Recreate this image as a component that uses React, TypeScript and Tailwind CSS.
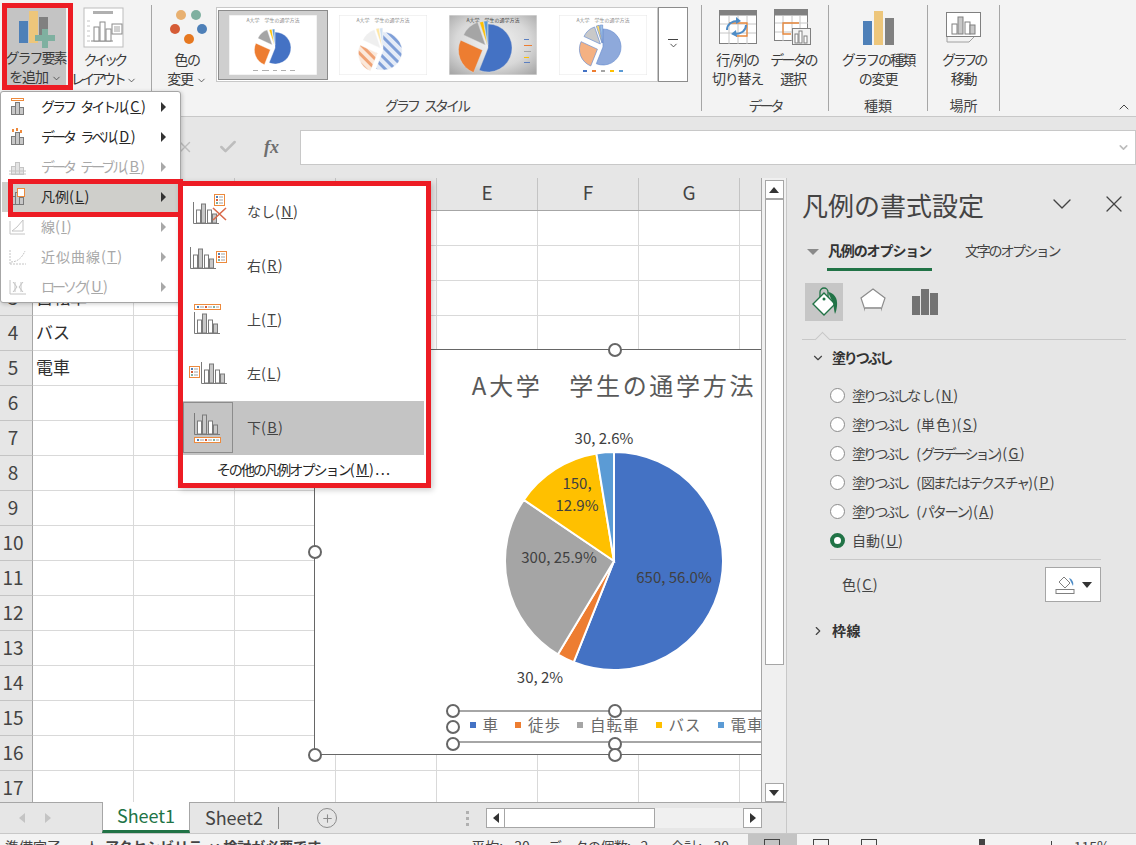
import { Check, ChevronDown, ChevronRight, ChevronUp, Plus, X } from "lucide-react";
import type { ReactNode } from "react";

const COLORS = ["#4472c4", "#ed7d31", "#a5a5a5", "#ffc000", "#5b9bd5"];
const VALUES = [650, 30, 300, 150, 30];
const THUMB_VALUES = [650, 300, 150, 30, 30];
const COLUMNS = ["A", "B", "C", "D", "E", "F", "G", "H"];
const ROWS = [1, 2, 3, 4, 5, 6, 7, 8, 9, 10, 11, 12, 13, 14, 15, 16, 17];
const CELLS: Record<number, string> = { 3: "自転車", 4: "バス", 5: "電車" };

const point = (cx: number, cy: number, r: number, deg: number) => {
  const rad = ((deg - 90) * Math.PI) / 180;
  return [cx + r * Math.cos(rad), cy + r * Math.sin(rad)];
};

const Pie = ({
  cx,
  cy,
  r,
  values = VALUES,
  explode = [0, 0, 0, 0, 0],
  fills = COLORS,
  stroke = "#ffffff",
  strokeWidth = 2,
}: {
  cx: number;
  cy: number;
  r: number;
  values?: number[];
  explode?: number[];
  fills?: string[];
  stroke?: string;
  strokeWidth?: number;
}) => {
  let angle = 0;
  return (
    <>
      {values.map((v, i) => {
        const sweep = (v / 1160) * 360;
        const [ox, oy] = point(cx, cy, explode[i], angle + sweep / 2);
        const [x0, y0] = point(ox, oy, r, angle);
        const [x1, y1] = point(ox, oy, r, angle + sweep);
        const d = `M${ox} ${oy}L${x0} ${y0}A${r} ${r} 0 ${sweep > 180 ? 1 : 0} 1 ${x1} ${y1}Z`;
        angle += sweep;
        return <path key={i} d={d} fill={fills[i]} stroke={stroke} strokeWidth={strokeWidth} />;
      })}
    </>
  );
};

const Thumb = ({ kind }: { kind: number }) => (
  <svg width="88" height="60" viewBox="0 0 88 60" className="shrink-0">
    <defs>
      <radialGradient id="thumbBg" cx="0.5" cy="0.45" r="0.7">
        <stop offset="0" stopColor="#f4f4f4" />
        <stop offset="0.6" stopColor="#d8d8d8" />
        <stop offset="1" stopColor="#a8a8a8" />
      </radialGradient>
      <pattern id="hatchBlue" width="7" height="7" patternUnits="userSpaceOnUse" patternTransform="rotate(-45)">
        <rect width="7" height="7" fill="#e4ebf7" />
        <rect width="3" height="7" fill="#7f9fd8" />
      </pattern>
      <pattern id="hatchOrange" width="7" height="7" patternUnits="userSpaceOnUse" patternTransform="rotate(-45)">
        <rect width="7" height="7" fill="#fbe8da" />
        <rect width="3" height="7" fill="#f0a274" />
      </pattern>
    </defs>
    <rect width="88" height="60" fill={kind === 2 ? "url(#thumbBg)" : "#ffffff"} stroke="#e6e6e6" />
    <text x="44" y="7" textAnchor="middle" fontSize="5" fill={kind === 2 ? "#444444" : "#8a8a8a"}>
      A大学　学生の通学方法
    </text>
    {kind === 0 && (
      <Pie cx={46} cy={33} r={16} values={THUMB_VALUES} explode={[0, 5, 4, 3, 3]} strokeWidth={0.4} />
    )}
    {kind === 1 && (
      <Pie
        cx={44}
        cy={36}
        r={19}
        values={THUMB_VALUES}
        explode={[0, 6, 4, 4, 4]}
        fills={["url(#hatchBlue)", "url(#hatchOrange)", "#efefef", "#ffe7a3", "#cfe1f3"]}
        stroke="#f4f4f4"
        strokeWidth={0.4}
      />
    )}
    {kind === 2 && (
      <Pie cx={39} cy={33} r={24} values={THUMB_VALUES} explode={[0, 6, 4, 3, 3]} stroke="#dddddd" strokeWidth={0.4} />
    )}
    {kind === 3 && (
      <Pie
        cx={44}
        cy={32}
        r={18}
        values={THUMB_VALUES}
        explode={[0, 6, 4, 4, 4]}
        fills={["#8ea9db", "#f4b183", "#c9c9c9", "#ffd966", "#9dc3e6"]}
        stroke="#6b8fd0"
        strokeWidth={0.7}
      />
    )}
    {kind === 2 && (
      <g fill="#5b7fc0">
        <rect x="75" y="24" width="5" height="1" />
        <rect x="75" y="30" width="8" height="1" fill="#ed7d31" />
        <rect x="75" y="36" width="7" height="1" fill="#a5a5a5" />
        <rect x="75" y="42" width="5" height="1" fill="#ffc000" />
        <rect x="75" y="47" width="6" height="1" />
      </g>
    )}
    {kind === 3 && (
      <g>
        {COLORS.map((c, i) => (
          <rect key={c} x={24 + i * 9} y="55" width="4" height="2" fill={c} />
        ))}
      </g>
    )}
    {kind === 0 && (
      <g fill="#b0b0b0">
        <rect x="24" y="55" width="5" height="1" />
        <rect x="33" y="55" width="7" height="1" />
        <rect x="44" y="55" width="4" height="1" />
        <rect x="52" y="55" width="5" height="1" />
        <rect x="61" y="55" width="5" height="1" />
      </g>
    )}
  </svg>
);

const RibbonLabel = ({ lines }: { lines: ReactNode[] }) => (
  <div className="-mt-[1px] flex flex-col items-center whitespace-nowrap text-[14px] leading-[19px] tracking-[-1.2px] text-[#3a3a3a]">
    {lines.map((l, i) => (
      <span key={i}>{l}</span>
    ))}
  </div>
);

const Caret = () => <ChevronDown size={11} strokeWidth={1.8} className="ml-[3px] inline-block text-[#444444]" />;

const RibbonButton = ({
  width,
  icon,
  lines,
  className = "",
}: {
  width: string;
  icon: ReactNode;
  lines: ReactNode[];
  className?: string;
}) => (
  <div className={`flex flex-col items-center ${width} ${className}`}>
    <div className="flex h-[46px] items-center justify-center">{icon}</div>
    <RibbonLabel lines={lines} />
  </div>
);

const Group = ({ width, label, children }: { width: string; label: ReactNode; children: ReactNode }) => (
  <div className={`flex h-[106px] shrink-0 flex-col border-r border-[#a6a6a6] ${width}`}>
    <div className="flex h-[90px] items-start justify-center">{children}</div>
    <div className="h-[16px] whitespace-nowrap text-center text-[14px] leading-[20px] text-[#444444]">{label}</div>
  </div>
);

const AddIcon = () => (
  <svg width="40" height="40" viewBox="0 0 40 40">
    <rect x="3" y="12" width="9" height="22" fill="#4e80b8" />
    <rect x="13" y="2" width="9" height="32" fill="#edc67b" />
    <rect x="23" y="8" width="9" height="20" fill="#808080" />
    <path d="M26 20h6v6h7v6h-7v7h-6v-7h-7v-6h7z" fill="#7fb0a0" />
  </svg>
);

const QuickIcon = () => (
  <svg width="42" height="42" viewBox="0 0 42 42">
    <rect x="1" y="1" width="39" height="39" fill="#ffffff" stroke="#bdbdbd" />
    <rect x="10" y="4" width="20" height="3" fill="#b0b0b0" />
    <path d="M4 14h3M4 19h3M4 24h3M4 29h3M4 34h3" stroke="#c4c4c4" />
    <path d="M8 34h22" fill="none" stroke="#8a8a8a" />
    <g fill="#ffffff" stroke="#8a8a8a">
      <rect x="11" y="20" width="5" height="14" />
      <rect x="17" y="15" width="5" height="19" />
      <rect x="23" y="22" width="5" height="12" />
    </g>
    <rect x="29" y="17" width="10" height="10" fill="#ffffff" stroke="#8a8a8a" />
    <path d="M31 20h6M31 22h6M31 24h6" stroke="#8a8a8a" strokeWidth="0.8" />
  </svg>
);

const ColorIcon = () => (
  <svg width="40" height="42" viewBox="0 0 40 42">
    <circle cx="14" cy="8" r="5" fill="#e8b070" />
    <circle cx="29" cy="8" r="5" fill="#7fb0a0" />
    <circle cx="8" cy="22" r="5" fill="#d55b35" />
    <circle cx="35" cy="22" r="5" fill="#4e80b8" />
    <circle cx="22" cy="32" r="5" fill="#e67820" />
  </svg>
);

const SwitchIcon = () => (
  <svg width="38" height="36" viewBox="0 0 38 36">
    <rect x="0.5" y="0.5" width="37" height="33" fill="#ffffff" stroke="#808080" />
    <rect x="0.5" y="0.5" width="37" height="5" fill="#808080" />
    <path d="M1 14h36M1 23h36M10 6v28M19 6v28M28 6v28" stroke="#c6c6c6" />
    <path d="M10 13h18v13H17" fill="none" stroke="#e8873a" strokeWidth="1.3" />
    <path d="M8 20c0-6 5-9 11-9M27 15c0 6-5 9-11 9" fill="none" stroke="#4e8cc6" strokeWidth="2" />
    <path d="M17 7l5 4-5 3zM18 27l-6-3 5-4z" fill="#4e8cc6" />
  </svg>
);

const SelectIcon = () => (
  <svg width="38" height="38" viewBox="0 0 38 38">
    <rect x="0.5" y="0.5" width="33" height="31" fill="#ffffff" stroke="#808080" />
    <rect x="0.5" y="0.5" width="33" height="6" fill="#808080" />
    <path d="M1 14h33M1 23h33M9 7v25M18 7v25M26 7v25" stroke="#c6c6c6" />
    <path d="M25 14H9v11h8" fill="none" stroke="#e8873a" strokeWidth="1.3" />
    <rect x="18.5" y="19.5" width="18" height="16" fill="#f3f3f3" stroke="#808080" />
    <g fill="#ffffff" stroke="#808080">
      <rect x="21" y="25" width="3" height="9" />
      <rect x="25" y="22" width="3" height="12" />
      <rect x="30" y="27" width="3" height="7" />
    </g>
  </svg>
);

const TypeIcon = () => (
  <svg width="34" height="36" viewBox="0 0 34 36">
    <rect x="2" y="11" width="9" height="24" fill="#4e80b8" />
    <rect x="13" y="1" width="9" height="34" fill="#edc67b" />
    <rect x="24" y="8" width="9" height="27" fill="#808080" />
  </svg>
);

const MoveIcon = () => (
  <svg width="36" height="34" viewBox="0 0 36 34">
    <path d="M1 25v6h22l6-6" fill="none" stroke="#a0a0a0" />
    <rect x="0.5" y="1.5" width="34" height="24" fill="#ffffff" stroke="#808080" />
    <rect x="6" y="13" width="5" height="10" fill="#ffffff" stroke="#808080" />
    <rect x="12" y="6" width="5" height="17" fill="#c8c8c8" stroke="#808080" />
    <rect x="19" y="11" width="5" height="12" fill="#ffffff" stroke="#808080" />
    <rect x="24" y="14" width="5" height="9" fill="#c8c8c8" stroke="#808080" />
  </svg>
);

const Ribbon = () => (
  <div className="flex h-[116px] shrink-0 bg-[#f3f3f3] pt-[5px]">
    <Group width="w-[152px]" label="">
      <div className="-mt-[2px] ml-[5px] flex h-[83px] w-[61px] flex-col items-center overflow-visible bg-[#c4c4c4] pt-[5px]">
        <div className="flex h-[43px] items-center">
          <AddIcon />
        </div>
        <RibbonLabel
          lines={[
            <span className="tracking-[-2px]">グラフ要素</span>,
            <>
              を追加
              <Caret />
            </>,
          ]}
        />
      </div>
      <RibbonButton
        width="w-[72px]"
        className="ml-[2px]"
        icon={<QuickIcon />}
        lines={[
          <span className="tracking-[-3.8px]">クイック</span>,
          <>
            <span className="tracking-[-3.5px]">レイアウト</span>
            <Caret />
          </>,
        ]}
      />
      <div className="w-[11px]" />
    </Group>
    <Group
      width="w-[550px]"
      label={<span className="tracking-[-3px] [word-spacing:6px]">グラフ スタイル</span>}
    >
      <div className="ml-[7px] w-[56px]">
        <RibbonButton
          width="w-[56px]"
          icon={<ColorIcon />}
          lines={[
            "色の",
            <>
              変更
              <Caret />
            </>,
          ]}
        />
      </div>
      <div className="ml-[1px] mt-[2px] flex h-[75px] w-[442px] items-center border border-[#c8c8c8] bg-white pl-[1px]">
        <div className="flex h-[70px] w-[110px] shrink-0 items-center justify-center border border-[#8c8c8c] bg-[#cfcfcf]">
          <Thumb kind={0} />
        </div>
        <div className="ml-[11px] flex gap-[22px]">
          <Thumb kind={1} />
          <Thumb kind={2} />
          <Thumb kind={3} />
        </div>
      </div>
      <div className="mt-[2px] flex h-[75px] w-[30px] shrink-0 flex-col items-center justify-center border border-[#8c8c8c] bg-white">
        <div className="h-px w-[10px] bg-[#444444]" />
        <ChevronDown size={11} strokeWidth={2} className="text-[#444444]" />
      </div>
      <div className="w-[13px]" />
    </Group>
    <Group width="w-[127px]" label={<span className="tracking-[-3px]">データ</span>}>
      <RibbonButton width="w-[56px]" icon={<SwitchIcon />} lines={["行/列の", "切り替え"]} />
      <RibbonButton
        width="w-[55px]"
        icon={<SelectIcon />}
        lines={[<span className="tracking-[-2.6px]">データの</span>, "選択"]}
      />
    </Group>
    <Group width="w-[99px]" label="種類">
      <RibbonButton
        width="w-[90px]"
        icon={<TypeIcon />}
        lines={[<span className="tracking-[-1.9px]">グラフの種類</span>, "の変更"]}
      />
    </Group>
    <Group width="w-[72px]" label="場所">
      <RibbonButton
        width="w-[60px]"
        icon={<MoveIcon />}
        lines={[<span className="tracking-[-3.2px]">グラフの</span>, "移動"]}
      />
    </Group>
    <div className="flex flex-1 items-end justify-end pb-[1px] pr-[4px]">
      <ChevronUp size={16} strokeWidth={1.5} className="text-[#444444]" />
    </div>
  </div>
);

const FormulaBar = () => (
  <div className="flex h-[62px] shrink-0 border-t border-[#c8c8c8] bg-[#e6e6e6] pt-[13px]">
    <div className="flex h-[34px] w-[300px] shrink-0 items-center pl-[176px]">
      <X size={18} strokeWidth={2} className="text-[#bdbdbd]" />
      <Check size={20} strokeWidth={3} className="ml-[24px] text-[#bdbdbd]" />
      <span className="ml-[26px] font-['Liberation_Serif',serif] text-[18px] font-bold italic text-[#6e6e6e]">fx</span>
    </div>
    <div className="flex h-[35px] flex-1 items-center justify-end border border-[#c8c8c8] bg-white pr-[5px]">
      <ChevronDown size={13} strokeWidth={3} className="text-[#bdbdbd]" />
    </div>
  </div>
);

const Handle = ({ x, y }: { x: number; y: number }) => (
  <span
    className="absolute h-[14px] w-[14px] rounded-full border-[2.5px] border-[#666666] bg-white"
    style={{ left: x - 7, top: y - 7 }}
  />
);

const DataLabel = ({ x, y, children }: { x: number; y: number; children: ReactNode }) => (
  <span
    className="absolute -translate-x-1/2 -translate-y-1/2 whitespace-nowrap text-[15px] leading-[21px] text-[#404040]"
    style={{ left: x, top: y }}
  >
    {children}
  </span>
);

const LegendItem = ({ color, label }: { color: string; label: string }) => (
  <div className="flex shrink-0 items-center whitespace-nowrap">
    <span className="h-[6px] w-[6px]" style={{ backgroundColor: color }} />
    <span className="ml-[7px] text-[15.5px] tracking-[1px] text-[#6a6a6a]">{label}</span>
  </div>
);

// chart spills past the sheet's right edge, the grid clips it
const Chart = () => (
  <div className="absolute left-[314px] top-[171px] h-[406px] w-[600px] border border-[#666666] bg-white">
    <div className="flex h-full flex-col items-center">
      <div className="mt-[15px] whitespace-nowrap text-[24px] leading-[40px] tracking-[2.7px] text-[#595959]">
        A大学　学生の通学方法
      </div>
      <svg width="232" height="232" viewBox="0 0 232 232" className="mt-[40px] shrink-0">
        <Pie cx={116} cy={116} r={109} />
      </svg>
      <div className="mt-[33px] flex h-[33px] w-[325px] shrink-0 items-center gap-[16px] border-y-2 border-[#a6a6a6] pb-[3px] pl-[18px]">
        <LegendItem color={COLORS[0]} label="車" />
        <LegendItem color={COLORS[1]} label="徒歩" />
        <LegendItem color={COLORS[2]} label="自転車" />
        <LegendItem color={COLORS[3]} label="バス" />
        <LegendItem color={COLORS[4]} label="電車" />
      </div>
    </div>
    <DataLabel x={289} y={87}>30, 2.6%</DataLabel>
    <DataLabel x={262} y={144}>
      <span className="block text-center leading-[22px]">150,</span>
      <span className="block text-center leading-[22px]">12.9%</span>
    </DataLabel>
    <DataLabel x={244} y={206}>300, 25.9%</DataLabel>
    <DataLabel x={359} y={226}>650, 56.0%</DataLabel>
    <DataLabel x={225} y={326}>30, 2%</DataLabel>
    <Handle x={300} y={0} />
    <Handle x={0} y={202} />
    <Handle x={0} y={405} />
    <Handle x={138} y={361} />
    <Handle x={300} y={361} />
    <Handle x={138} y={377} />
    <Handle x={138} y={394} />
    <Handle x={300} y={394} />
    <Handle x={300} y={405} />
  </div>
);

const Sheet = () => (
  <div className="relative h-[624px] w-[762px] shrink-0 overflow-hidden border-r border-[#a6a6a6] bg-white">
    <div className="flex h-[33px] border-b border-[#a6a6a6] bg-[#e6e6e6]">
      <div className="w-[33px] shrink-0 border-r border-[#a6a6a6]" />
      {COLUMNS.map((c) => (
        <div
          key={c}
          className="flex w-[101px] shrink-0 items-center justify-center border-r border-[#c4c4c4] pb-[3px] text-[19px] text-[#444444]"
        >
          {c}
        </div>
      ))}
    </div>
    {ROWS.map((r) => (
      <div key={r} className="flex h-[35px]">
        <div className="flex w-[33px] shrink-0 items-center justify-center border-b border-r border-[#a6a6a6] border-b-[#c4c4c4] bg-[#e6e6e6] pb-[2px] pr-[6px] text-[19px] text-[#444444]">
          {r}
        </div>
        {COLUMNS.map((c) => (
          <div
            key={c}
            className="flex w-[101px] shrink-0 items-center border-b border-r border-[#d9d9d9] pb-[2px] pl-[3px] text-[17px] text-[#303030]"
          >
            {c === "A" ? CELLS[r] : ""}
          </div>
        ))}
      </div>
    ))}
    <Chart />
  </div>
);

const ScrollBtn = ({ children, className = "" }: { children: ReactNode; className?: string }) => (
  <div className={`flex shrink-0 items-center justify-center border border-[#a6a6a6] bg-white ${className}`}>
    {children}
  </div>
);

const TriUp = () => <div className="h-0 w-0 border-x-[5px] border-b-[6px] border-x-transparent border-b-[#333333]" />;
const TriDown = () => <div className="h-0 w-0 border-x-[5px] border-t-[6px] border-x-transparent border-t-[#333333]" />;
const TriLeft = () => <div className="h-0 w-0 border-y-[5px] border-r-[6px] border-y-transparent border-r-[#333333]" />;
const TriRight = () => <div className="h-0 w-0 border-y-[5px] border-l-[6px] border-y-transparent border-l-[#333333]" />;

const VerticalScroll = () => (
  <div className="flex h-[624px] w-[24px] shrink-0 flex-col items-center bg-[#f0f0f0] pt-[2px]">
    <ScrollBtn className="h-[19px] w-[19px]">
      <TriUp />
    </ScrollBtn>
    <div className="h-[466px] w-[19px] shrink-0 border border-[#a6a6a6] bg-white" />
    <div className="flex-1" />
    <ScrollBtn className="h-[19px] w-[19px]">
      <TriDown />
    </ScrollBtn>
  </div>
);

const SheetTabs = () => (
  <div className="flex h-[31px] shrink-0 items-stretch border-t border-[#a6a6a6] bg-[#e6e6e6]">
    <div className="flex w-[102px] shrink-0 items-center gap-[20px] pl-[19px] text-[#bdbdbd]">
      <div className="h-0 w-0 border-y-[5px] border-r-[6px] border-y-transparent border-r-[#c4c4c4]" />
      <div className="h-0 w-0 border-y-[5px] border-l-[6px] border-y-transparent border-l-[#c4c4c4]" />
    </div>
    <div className="-mt-px flex w-[88px] shrink-0 items-center justify-center border-x border-[#a6a6a6] border-b-[3px] border-b-[#217346] bg-white pb-[1px] text-[18px] text-[#217346]">
      Sheet1
    </div>
    <div className="flex w-[88px] shrink-0 items-center justify-center pb-[2px] text-[18px] text-[#444444]">Sheet2</div>
    <div className="my-[4px] w-px bg-[#8c8c8c]" />
    <div className="ml-[38px] flex items-center">
      <div className="flex h-[20px] w-[20px] items-center justify-center rounded-full border border-[#8c8c8c]">
        <Plus size={13} strokeWidth={2} className="text-[#8c8c8c]" />
      </div>
    </div>
    <div className="ml-[129px] flex flex-col items-center justify-center gap-[3px]">
      <span className="h-[3px] w-[3px] bg-[#b0b0b0]" />
      <span className="h-[3px] w-[3px] bg-[#b0b0b0]" />
      <span className="h-[3px] w-[3px] bg-[#b0b0b0]" />
    </div>
    <div className="ml-[17px] flex items-center">
      <ScrollBtn className="h-[20px] w-[19px]">
        <TriLeft />
      </ScrollBtn>
      <div className="h-[20px] w-[150px] border border-l-0 border-[#a6a6a6] bg-white" />
      <div className="h-[20px] w-[88px] bg-[#f0f0f0]" />
      <ScrollBtn className="h-[20px] w-[19px]">
        <TriRight />
      </ScrollBtn>
    </div>
  </div>
);

const Accel = ({ k, after = "" }: { k: string; after?: string }) => (
  <span className="text-[14.5px] tracking-[1.3px]">
    (<span className="underline">{k}</span>){after}
  </span>
);

const Radio = ({ label, accel, on = false }: { label: ReactNode; accel: string; on?: boolean }) => (
  <div className="flex h-[29px] items-center">
    <span
      className={
        on
          ? "h-[15px] w-[15px] rounded-full border-[4px] border-[#217346] bg-white"
          : "h-[15px] w-[15px] rounded-full border border-[#8c8c8c] bg-white"
      }
    />
    <span className="ml-[7px] whitespace-nowrap pb-[2px] text-[14px] text-[#444444]">
      {label}
      <Accel k={accel} />
    </span>
  </div>
);

const FILL_WORD = <span className="tracking-[-3px]">塗りつぶし</span>;

const BucketIcon = () => (
  <svg width="30" height="30" viewBox="0 0 30 30">
    <path d="M15 6L26 17 15 28 4 17z" fill="#ffffff" stroke="#217346" strokeWidth="1.4" />
    <path d="M11 10V5a4 4 0 0 1 8 0v5" fill="none" stroke="#217346" strokeWidth="1.3" />
    <circle cx="15" cy="12" r="1.5" fill="#217346" />
    <path d="M19 5c6 1 10 6 9 14-.4 3-1 6-2 8-1-3-1-7-2-11z" fill="#217346" />
  </svg>
);

const Pane = () => (
  <div className="flex h-[655px] flex-1 flex-col border-l border-[#c8c8c8] bg-[#e6e6e6] pl-[15px]">
    <div className="flex h-[56px] shrink-0 items-center">
      <div className="whitespace-nowrap pb-[3px] text-[26px] text-[#444444]">凡例の書式設定</div>
      <ChevronDown size={32} strokeWidth={1} className="ml-[62px] -mt-[4px] text-[#444444]" />
      <X size={28} strokeWidth={1.1} className="ml-[22px] -mt-[4px] text-[#444444]" />
    </div>
    <div className="flex h-[37px] shrink-0 items-start">
      <div className="ml-[5px] mt-[15px] h-0 w-0 border-x-[6px] border-t-[6px] border-x-transparent border-t-[#8a8a8a]" />
      <div className="ml-[8px] flex h-[37px] w-[105px] justify-center border-b-[3px] border-[#217346] pt-[6px] text-[14px] font-bold leading-[20px] tracking-[-1.1px] text-[#333333]">
        凡例のオプション
      </div>
      <div className="ml-[33px] whitespace-nowrap pt-[6px] text-[14px] leading-[20px] tracking-[-2.2px] text-[#444444]">
        文字のオプション
      </div>
    </div>
    <div className="mt-[12px] flex h-[38px] shrink-0 items-center">
      <div className="ml-[3px] flex h-[38px] w-[38px] items-center justify-center bg-[#c6c6c6]">
        <BucketIcon />
      </div>
      <svg width="30" height="30" viewBox="0 0 30 30" className="ml-[15px]">
        <path d="M15 2L27 11 22 26H8L3 11z" fill="#ffffff" stroke="#8c8c8c" strokeWidth="1.2" />
        <path d="M7 22h16v6H7z" fill="#e6e6e6" />
        <path d="M7 21h16" stroke="#8c8c8c" strokeWidth="1.6" />
      </svg>
      <svg width="28" height="28" viewBox="0 0 28 28" className="ml-[23px]">
        <rect x="1" y="8" width="8" height="19" fill="#737373" />
        <rect x="10" y="1" width="8" height="26" fill="#737373" />
        <rect x="19" y="5" width="8" height="22" fill="#737373" />
      </svg>
    </div>
    <div className="relative mt-[18px] h-px w-[324px] shrink-0 bg-[#c8c8c8]">
      <span className="absolute -top-[5px] left-[15px] h-[11px] w-[11px] rotate-45 border-l border-t border-[#c8c8c8] bg-[#e6e6e6]" />
    </div>
    <div className="flex h-[36px] shrink-0 items-center pl-[9px]">
      <ChevronDown size={14} strokeWidth={2} className="text-[#444444]" />
      <span className="ml-[7px] pb-[2px] text-[14px] font-bold tracking-[-2.2px] text-[#333333]">塗りつぶし</span>
    </div>
    <div className="ml-[28px] mt-[5px] flex shrink-0 flex-col">
      <Radio label={<>{FILL_WORD}なし</>} accel="N" />
      <Radio
        label={
          <>
            {FILL_WORD}
            <span className="ml-[9px]">
              (<span className="tracking-[1.5px]">単色</span>)
            </span>
          </>
        }
        accel="S"
      />
      <Radio
        label={
          <>
            {FILL_WORD}
            <span className="ml-[9px]">
              (<span className="tracking-[-3px]">グラデーション</span>)
            </span>
          </>
        }
        accel="G"
      />
      <Radio
        label={
          <>
            {FILL_WORD}
            <span className="ml-[9px]">
              (<span className="tracking-[-2px]">図またはテクスチャ</span>)
            </span>
          </>
        }
        accel="P"
      />
      <Radio
        label={
          <>
            {FILL_WORD}
            <span className="ml-[9px]">
              (<span className="tracking-[-2px]">パターン</span>)
            </span>
          </>
        }
        accel="A"
      />
      <Radio label="自動" accel="U" on />
    </div>
    <div className="ml-[28px] mt-[4px] h-px w-[271px] shrink-0 bg-[#c8c8c8]" />
    <div className="ml-[40px] mt-[7px] flex h-[35px] w-[259px] shrink-0 items-center justify-between">
      <span className="pb-[2px] text-[14px] text-[#444444]">
        色<Accel k="C" />
      </span>
      <div className="flex h-[35px] w-[56px] items-center justify-center gap-[7px] border border-[#a6a6a6] bg-white">
        <svg width="20" height="20" viewBox="0 0 20 20">
          <path d="M9 2l6 6-5 5-6-6z" fill="#ffffff" stroke="#808080" />
          <path d="M14 3c3 1 5 4 4 8l-2-4z" fill="#4e8cc6" />
          <rect x="1" y="14.5" width="18" height="4" fill="#ffffff" stroke="#808080" />
        </svg>
        <TriDown />
      </div>
    </div>
    <div className="mt-[17px] flex h-[24px] shrink-0 items-center pl-[9px]">
      <ChevronRight size={14} strokeWidth={2} className="text-[#444444]" />
      <span className="ml-[7px] pb-[2px] text-[14px] font-bold tracking-[0.5px] text-[#333333]">枠線</span>
    </div>
  </div>
);

const StatusBar = () => (
  <div className="flex h-[12px] shrink-0 overflow-hidden border-t border-[#c8c8c8] bg-[#f3f3f3] text-[14px] leading-[20px] text-[#444444]">
    <span className="ml-[5px] mt-[2px] whitespace-nowrap">準備完了</span>
    <span className="ml-[24px] mt-[2px] whitespace-nowrap font-bold">
      <span className="mr-[6px] font-normal">⼈</span>アクセシビリティ: 検討が必要です
    </span>
    <span className="ml-[150px] mt-[2px] whitespace-nowrap [word-spacing:8px]">平均: 30</span>
    <span className="ml-[18px] mt-[2px] whitespace-nowrap tracking-[-0.8px] [word-spacing:8px]">データの個数: 2</span>
    <span className="ml-[23px] mt-[2px] whitespace-nowrap [word-spacing:8px]">合計: 30</span>
    <div className="ml-auto flex shrink-0">
      <div className="flex h-[12px] w-[49px] justify-center bg-[#c4c4c4] pt-[5px]">
        <span className="h-[10px] w-[16px] border border-[#444444]" />
      </div>
      <span className="ml-[16px] mt-[5px] h-[10px] w-[16px] border border-[#444444]" />
      <span className="ml-[32px] mt-[5px] h-[10px] w-[16px] border border-[#444444]" />
      <span className="ml-[102px] mt-[5px] h-[10px] w-[6px] bg-[#444444]" />
      <span className="ml-[66px] mt-[7px] h-[10px] w-px bg-[#444444]" />
      <span className="ml-[22px] mr-[26px] mt-[2px] whitespace-nowrap">115%</span>
    </div>
  </div>
);

const MenuBars = ({ ax, base, stroke = "#7a7a7a" }: { ax: number; base: number; stroke?: string }) => (
  <g stroke={stroke}>
    <path d={`M${ax + 0.5} ${base - 21}V${base + 0.5}H${ax + 26}`} fill="none" />
    <rect x={ax + 3.5} y={base - 13} width="4" height="13" fill="#ffffff" />
    <rect x={ax + 8.5} y={base - 19} width="4" height="19" fill="#c8c8c8" />
    <rect x={ax + 14.5} y={base - 13} width="4" height="13" fill="#ffffff" />
    <rect x={ax + 19.5} y={base - 9} width="4" height="9" fill="#c8c8c8" />
  </g>
);

const LegendBox = ({ x, y }: { x: number; y: number }) => (
  <g>
    <rect x={x + 0.5} y={y + 0.5} width="10" height="11" fill="#ffffff" stroke="#ed8a3d" />
    <rect x={x + 2} y={y + 2} width="2" height="2" fill="#4e80b8" />
    <rect x={x + 2} y={y + 5} width="2" height="2" fill="#d55b35" />
    <rect x={x + 2} y={y + 8} width="2" height="2" fill="#7fb0a0" />
    <path d={`M${x + 5} ${y + 3}h4M${x + 5} ${y + 6}h4M${x + 5} ${y + 9}h4`} stroke="#8a8a8a" strokeWidth="0.8" />
  </g>
);

const LegendStrip = ({ x, y }: { x: number; y: number }) => (
  <g>
    <rect x={x + 0.5} y={y + 0.5} width="26" height="5" fill="#ffffff" stroke="#ed8a3d" />
    <rect x={x + 3} y={y + 2} width="2" height="2" fill="#4e80b8" />
    <rect x={x + 11} y={y + 2} width="2" height="2" fill="#d55b35" />
    <rect x={x + 19} y={y + 2} width="2" height="2" fill="#7fb0a0" />
    <path d={`M${x + 6} ${y + 3}h4M${x + 14} ${y + 3}h4M${x + 22} ${y + 3}h3`} stroke="#8a8a8a" strokeWidth="0.8" />
  </g>
);

const SubIcon = ({ pos }: { pos: string }) => (
  <svg width="50" height="54" viewBox="0 0 50 54" className="shrink-0">
    <g transform="translate(0 1)">
      {pos === "none" && (
        <>
          <MenuBars ax={10} base={37} />
          <LegendBox x={31} y={8} />
          <path d="M30 22l13 12M43 22L30 34" stroke="#d9694a" strokeWidth="1.6" />
        </>
      )}
      {pos === "right" && (
        <>
          <MenuBars ax={7} base={28} />
          <LegendBox x={33} y={11} />
        </>
      )}
      {pos === "top" && (
        <>
          <LegendStrip x={11} y={10} />
          <MenuBars ax={11} base={39} />
        </>
      )}
      {pos === "left" && (
        <>
          <LegendBox x={6} y={18} />
          <MenuBars ax={18} base={35} />
        </>
      )}
      {pos === "bottom" && (
        <>
          <MenuBars ax={11} base={32} />
          <LegendStrip x={11} y={35} />
        </>
      )}
    </g>
  </svg>
);

const SubItem = ({ pos, label, accel, on = false }: { pos: string; label: string; accel: string; on?: boolean }) => (
  <div className={on ? "mr-[2px] flex h-[54px] items-center bg-[#c4c4c4]" : "flex h-[54px] items-center"}>
    {on ? (
      <div className="relative h-[54px] w-[50px] shrink-0">
        <SubIcon pos={pos} />
        <span className="absolute inset-x-0 bottom-[2px] top-[1px] border border-[#8c8c8c]" />
      </div>
    ) : (
      <SubIcon pos={pos} />
    )}
    <span className="ml-[14px] whitespace-nowrap pb-[2px] text-[14px] text-[#444444]">
      {label}
      <Accel k={accel} />
    </span>
  </div>
);

const SubMenu = () => (
  <div className="absolute left-[178px] top-[181px] h-[307px] w-[253px] border-[5px] border-[#ed1c24] bg-white shadow-[2px_2px_6px_rgba(0,0,0,0.2)]">
    <div className="-mt-px">
      <SubItem pos="none" label="なし" accel="N" />
      <SubItem pos="right" label="右" accel="R" />
      <SubItem pos="top" label="上" accel="T" />
      <SubItem pos="left" label="左" accel="L" />
      <SubItem pos="bottom" label="下" accel="B" on />
    </div>
    <div className="flex h-[28px] items-center justify-center whitespace-nowrap pr-[1px] text-[14px] text-[#262626]">
      <span className="tracking-[-1.9px]">その他の凡例オプション</span>
      <Accel k="M" after="..." />
    </div>
  </div>
);

const MenuIcon = ({ kind, off }: { kind: string; off: boolean }) => {
  const c = off ? "#c4c4c4" : "#7a7a7a";
  const fill = off ? "#e4e4e4" : "#c8c8c8";
  return (
    <svg width="20" height="20" viewBox="0 0 20 20" className="shrink-0">
      {(kind === "title" || kind === "label" || kind === "table" || kind === "legend") && (
        <g stroke={c} fill={fill}>
          <rect x="3.5" y="9.5" width="4" height="8" />
          <rect x="7.5" y="5.5" width="4" height="12" />
          <rect x="11.5" y="10.5" width="4" height="7" />
        </g>
      )}
      {kind === "title" && <rect x="3.5" y="1.5" width="12" height="2" fill="#ffffff" stroke="#ed8a3d" />}
      {kind === "label" && <path d="M5 2v3M9 1v3M13 3v3" stroke="#ed8a3d" strokeWidth="2" />}
      {kind === "table" && <path d="M1 14h17M1 17h17" stroke={c} />}
      {kind === "legend" && <rect x="9.5" y="1.5" width="7" height="8" fill="#ffffff" stroke="#ed8a3d" />}
      {kind === "line" && <path d="M2 17V4M2 17h15M4 14l5-4 6-7v11z" fill="none" stroke={c} />}
      {kind === "trend" && <path d="M2 17V3M2 17h16M3 15c6 0 11-4 14-11" fill="none" stroke={c} strokeDasharray="2 1" />}
      {kind === "candle" && <path d="M2 17V3M2 17h16M5 5l4 5-4 5M15 5l-4 5 4 5M7 5v10M13 5v10" fill="none" stroke={c} />}
    </svg>
  );
};

const MenuItem = ({
  kind,
  label,
  accel,
  off = false,
  on = false,
}: {
  kind: string;
  label: ReactNode;
  accel: string;
  off?: boolean;
  on?: boolean;
}) => (
  <div className={on ? "flex h-[30px] items-center bg-[#cfcfcb] pl-[6px] pr-[13px]" : "flex h-[30px] items-center pl-[6px] pr-[13px]"}>
    <MenuIcon kind={kind} off={off} />
    <span
      className={
        off
          ? "ml-[13px] flex-1 whitespace-nowrap pb-[2px] text-[14px] text-[#a8a8a8]"
          : "ml-[13px] flex-1 whitespace-nowrap pb-[2px] text-[14px] text-[#262626]"
      }
    >
      {label}
      <Accel k={accel} />
    </span>
    <div
      className={
        off
          ? "h-0 w-0 border-y-[5px] border-l-[5px] border-y-transparent border-l-[#a8a8a8]"
          : "h-0 w-0 border-y-[5px] border-l-[5px] border-y-transparent border-l-[#333333]"
      }
    />
  </div>
);

const Kana = ({ children }: { children: string }) => (
  <span className="tracking-[-3px] [word-spacing:6px]">{children}</span>
);

const ElementMenu = () => (
  <div className="absolute left-0 top-[91px] w-[181px] rounded-[3px] border border-[#a6a6a6] bg-white px-px shadow-[1px_1px_4px_rgba(0,0,0,0.2)]">
    <MenuItem kind="title" label={<Kana>グラフ タイトル</Kana>} accel="C" />
    <MenuItem kind="label" label={<Kana>データ ラベル</Kana>} accel="D" />
    <MenuItem kind="table" label={<Kana>データ テーブル</Kana>} accel="B" off />
    <MenuItem kind="legend" label="凡例" accel="L" on />
    <MenuItem kind="line" label="線" accel="I" off />
    <MenuItem kind="trend" label={<span className="tracking-[1px]">近似曲線</span>} accel="T" off />
    <MenuItem kind="candle" label={<Kana>ローソク</Kana>} accel="U" off />
  </div>
);

const App = () => {
  return (
    <div className="relative flex h-[845px] w-[1136px] flex-col overflow-hidden bg-[#e6e6e6] font-['Noto_Sans_CJK_JP','Noto_Sans',sans-serif]">
      <Ribbon />
      <FormulaBar />
      <div className="flex flex-1">
        {/* Sheet */}
        <div className="flex w-[786px] shrink-0 flex-col">
          <div className="flex">
            <Sheet />
            <VerticalScroll />
          </div>
          <SheetTabs />
        </div>
        {/* Format pane */}
        <Pane />
      </div>
      <StatusBar />

      {/* Menus and the red marks drawn on the screenshot */}
      <ElementMenu />
      <SubMenu />
      <div className="absolute left-[2px] top-[3px] h-[87px] w-[71px] border-[5px] border-[#ed1c24]" />
      <div className="absolute left-[8px] top-[179px] h-[38px] w-[175px] border-[5px] border-[#ed1c24]" />
    </div>
  );
};

export default App;
